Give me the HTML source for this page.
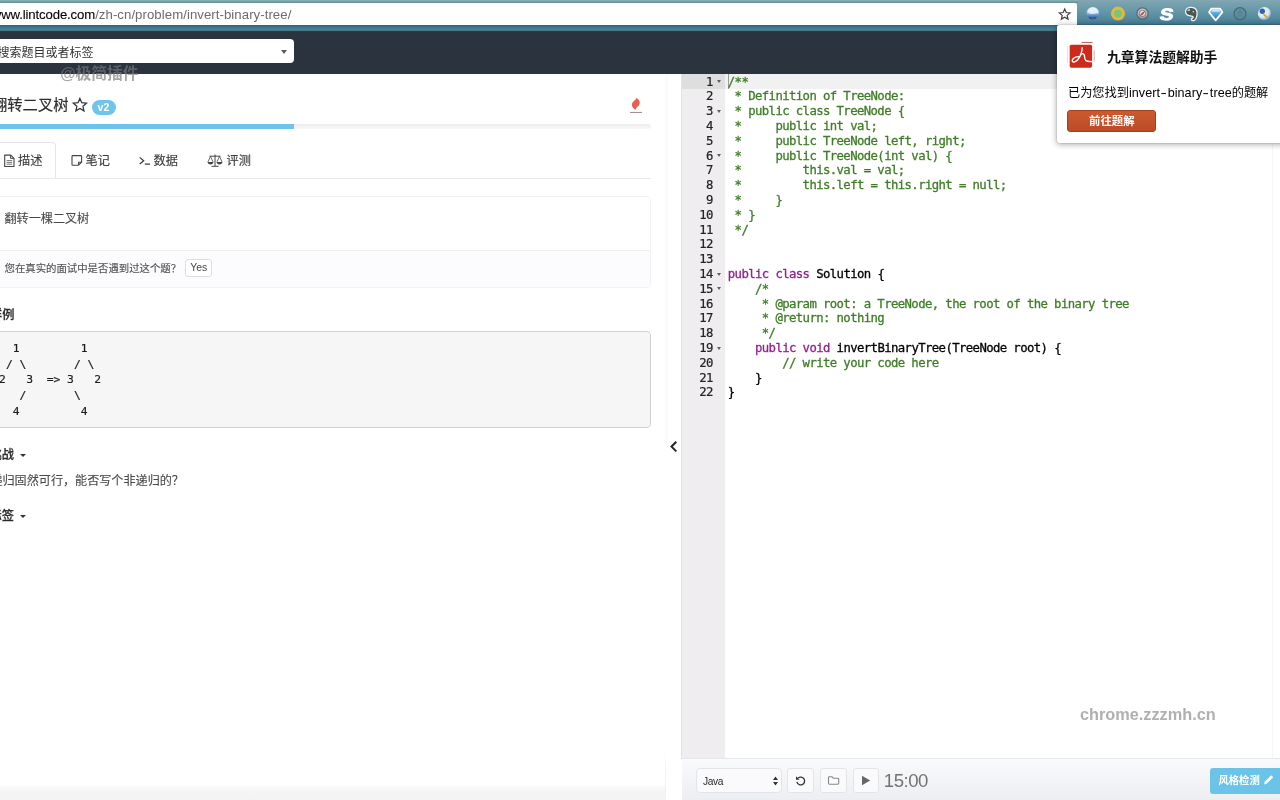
<!DOCTYPE html>
<html lang="zh-CN">
<head>
<meta charset="utf-8">
<title>翻转二叉树 - LintCode</title>
<style>
*{box-sizing:border-box;margin:0;padding:0}
html,body{width:1280px;height:800px;overflow:hidden;background:#fff}
body{position:relative;font-family:"Liberation Sans","Noto Sans CJK SC",sans-serif;color:#333;font-size:12.2px}
.abs{position:absolute;white-space:nowrap}
#root{position:absolute;left:0;top:0;width:1280px;height:800px;overflow:hidden;will-change:transform;transform:translateZ(0)}
svg{position:absolute;overflow:visible}
/* browser chrome */
#chromebar{left:0;top:0;width:1280px;height:26px;background:linear-gradient(#83a7b3 0,#7aa2af 10%,#6799a9 40%,#51889c 75%,#437c94 92%,#315f75 100%)}
#band{left:0;top:25px;width:1280px;height:6.6px;background:linear-gradient(#2d6078 0,#397288 25%,#457d93 55%,#4f869b 75%,#2c4c5c 88%,#1d2a35 100%)}
#topstrip{left:0;top:0;width:1078px;height:3px;background:linear-gradient(#85b3b2 0,#80adae 35%,#688f95 70%,#6c9399 100%)}
#urlbar{left:-10px;top:2.6px;width:1087px;height:22.6px;background:#fff;border-radius:0 2px 0 0}
#url{left:-8.2px;top:7px;font-size:13.2px;line-height:16px;color:#6c6c6c;letter-spacing:.06px}
#url b{font-weight:normal;color:#000;letter-spacing:-.14px;-webkit-text-stroke:.1px #000}
/* navbar */
#navbar{left:0;top:31.5px;width:1280px;height:42.5px;background:#2b333e}
#search{left:-10px;top:39.2px;width:304px;height:24.2px;background:#fff;border-radius:4px}
#searchtxt{left:-2.5px;top:45.5px;font-size:12px;line-height:15px;color:#333}
#caret{left:281.4px;top:49.6px;width:0;height:0;border-left:3.6px solid transparent;border-right:3.6px solid transparent;border-top:4.4px solid #5a5a5a}
#wm1{left:60.3px;top:63.3px;font-size:15.8px;line-height:22px;color:rgba(120,120,120,.66);letter-spacing:-.1px;font-weight:700}
/* left panel */
#title{left:-8px;top:94px;font-size:15.3px;line-height:22px;color:#2e2e2e;font-weight:400;-webkit-text-stroke:.2px}
#badge{left:91.5px;top:99.5px;width:24px;height:15px;border-radius:7.5px;background:#6ec4ea;color:#fff;font-weight:bold;font-size:10.6px;line-height:14.5px;text-align:center}
#prog{left:-10px;top:124px;width:660.5px;height:4.7px;border-radius:3px;background:linear-gradient(#ececec,#f8f8f8);overflow:hidden}
#prog i{display:block;width:304px;height:100%;background:#6cc3eb}
#tabline{left:0;top:177.5px;width:650.5px;height:1px;background:#e8e8e8}
#tabact{left:-10px;top:141.8px;width:65.7px;height:36.7px;border:1px solid #e6e6e6;border-bottom:0;border-radius:4px 4px 0 0;background:#fff}
.tab{top:152.5px;font-size:12.2px;line-height:16px;color:#3d3d3d;font-weight:400;-webkit-text-stroke:.15px}
#panel{left:-10px;top:196px;width:660.5px;height:91.5px;border:1px solid #f2f2f2;border-radius:4px;background:#fff;overflow:hidden}
#pfoot{left:0;top:52.5px;width:660px;height:38px;background:#fcfbfd;border-top:1px solid #f0eff1}
#ptext{left:4.5px;top:211.3px;font-size:12.1px;line-height:17px;color:#4a4a4a;-webkit-text-stroke:.12px}
#ftext{left:4.5px;top:261px;font-size:10.4px;line-height:16px;color:#505050;font-weight:400;-webkit-text-stroke:.12px}
#yes{left:185.2px;top:259.3px;width:27.2px;height:18px;border:1px solid #ddd;border-radius:3px;background:#fff;font-size:10.4px;line-height:16px;text-align:center;color:#444}
.h{font-size:12.2px;line-height:16px;font-weight:500;color:#2b2b2b;-webkit-text-stroke:.25px}
.car{width:0;height:0;border-left:3px solid transparent;border-right:3px solid transparent;border-top:3.5px solid #333}
#pre{left:-10px;top:331px;width:660.5px;height:96.5px;border:1px solid #d2d2d2;border-radius:4px;background:#f6f6f6}
#pretxt{left:-0.9px;top:341.3px;font-family:"DejaVu Sans Mono","Liberation Mono",monospace;font-size:11.3px;line-height:15.6px;color:#1c1c1c;white-space:pre;-webkit-text-stroke:.2px}
#chal{left:-9.6px;top:473px;font-size:12.1px;line-height:17px;color:#4a4a4a;-webkit-text-stroke:.12px}
/* editor */
#gutter{left:681.5px;top:74px;width:43px;height:685px;background:#efedef}
#actg{left:681.5px;top:74px;width:43px;height:14.8px;background:#dedede}
#actl{left:724.5px;top:74px;width:555.5px;height:14.8px;background:#f1f1f1}
#pm{left:1272px;top:74px;width:1px;height:685px;background:#f5f5f5}
#nums,#code{top:74.6px;font-family:"DejaVu Sans Mono","Liberation Mono",monospace;font-size:12.3px;letter-spacing:-.605px;line-height:14.8px;white-space:pre}
#nums{left:681.5px;width:31.3px;text-align:right;color:#222;-webkit-text-stroke:.2px}
#code{left:727.8px;color:#000;-webkit-text-stroke:.3px}
#code .c{color:#3f7d27}
#code .k{color:#951f8f}
.fold{left:716.7px;width:0;height:0;border-left:2.5px solid transparent;border-right:2.5px solid transparent;border-top:3.3px solid #5e5e5e}
#cursor{left:728px;top:74px;width:1px;height:14.8px;background:#9a9a9a}
/* bottom bar */
#bottombar{left:681.5px;top:758px;width:598.5px;height:42px;background:linear-gradient(#f9fafc,#edeef1);border-top:1px solid #e6e7ea}
.btn{top:768px;height:25px;border:1px solid #e3e4e8;border-radius:3px;background:#fafafc}
#timer{left:883.8px;top:769.3px;font-size:18.6px;line-height:24px;color:#737373;letter-spacing:-.5px}
#lint{left:1209.5px;top:768px;width:80px;height:25.5px;border-radius:3px;background:#6cc3e8}
#linttxt{left:1218.5px;top:773px;font-size:10.3px;line-height:15px;color:#fff;font-weight:bold}
#wm2{left:1080px;top:702.5px;font-size:16.3px;line-height:22px;color:#b0b0b0;font-weight:bold}
/* popup */
#popup{left:1057px;top:25px;width:240px;height:118px;background:#fff;border-radius:2px;box-shadow:0 1px 6px rgba(0,0,0,.38),0 0 1px rgba(0,0,0,.5)}
#ptitle{left:1107px;top:47.6px;font-size:13.8px;line-height:20px;font-weight:bold;color:#111}
#pmsg{left:1068px;top:84px;font-size:12.2px;line-height:18px;color:#000}
#pmsg .la{font-size:12.6px;letter-spacing:.05px}
#pmsg i{font-style:normal;display:inline-block;width:7.6px;text-align:center;transform:scaleX(1.5)}
#pbtn{left:1067.4px;top:110px;width:88.8px;height:22.3px;border:1px solid #a1401f;border-radius:3px;background:linear-gradient(#cc5a30,#be4a25);color:#fff;font-weight:bold;font-size:11.4px;line-height:21.6px;text-align:center}
</style>
</head>
<body>
<div id="root">
<div class="abs" id="chromebar"></div>
<div class="abs" id="topstrip"></div>
<div class="abs" id="band"></div>
<div class="abs" id="urlbar"></div>
<div class="abs" id="url"><b>www.lintcode.com</b>/zh-cn/problem/invert-binary-tree/</div>
<div class="abs" id="navbar"></div>
<div class="abs" id="search"></div>
<div class="abs" id="searchtxt">搜索题目或者标签</div>
<div class="abs" id="caret"></div>

<!-- LEFT -->
<div class="abs" id="title">翻转二叉树</div>
<div class="abs" id="badge">v2</div>
<div class="abs" id="prog"><i></i></div>
<div class="abs" id="tabline"></div>
<div class="abs" id="tabact"></div>
<div class="abs tab" style="left:18px">描述</div>
<div class="abs tab" style="left:85.5px">笔记</div>
<div class="abs tab" style="left:153.5px">数据</div>
<div class="abs tab" style="left:226.5px">评测</div>
<div class="abs" id="panel"><div class="abs" id="pfoot"></div></div>
<div class="abs" id="ptext">翻转一棵二叉树</div>
<div class="abs" id="ftext">您在真实的面试中是否遇到过这个题？</div>
<div class="abs" id="yes">Yes</div>
<div class="abs h" style="left:-10px;top:306.8px">样例</div>
<div class="abs" id="pre"></div>
<div class="abs" id="pretxt">  1         1
 / \       / \
2   3  =&gt; 3   2
   /       \
  4         4</div>
<div class="abs h" style="left:-10.5px;top:446.7px">挑战</div>
<div class="abs car" style="left:20.3px;top:453.5px"></div>
<div class="abs" id="chal">递归固然可行，能否写个非递归的？</div>
<div class="abs h" style="left:-10.5px;top:507.7px">标签</div>
<div class="abs car" style="left:20.3px;top:514.5px"></div>

<!-- title star -->
<svg style="left:0;top:0" width="1280" height="800" viewBox="0 0 1280 800" aria-hidden="true">
<polygon points="79.90,98.40 81.78,102.71 86.46,103.17 82.94,106.29 83.96,110.88 79.90,108.50 75.84,110.88 76.86,106.29 73.34,103.17 78.02,102.71" fill="none" stroke="#333" stroke-width="1.25" stroke-linejoin="miter"/>
<!-- fire -->
<path d="M636.300 97.700C638.600 99.200 640.100 101.200 639.700 103.400C639.300 105.700 637.100 106.800 636.100 108.200C635.700 108.800 635.500 109.400 635.600 110.100C633.600 108.700 631.900 106.900 631.900 104.800C631.900 102.600 633.600 101.400 634.800 100.300C635.600 99.500 636.200 98.800 636.300 97.700Z" fill="#e85f4f"/>
<rect x="630" y="111.900" width="12" height="1" fill="#9a8585"/>
<!-- file icon -->
<g fill="none" stroke="#444" stroke-width="1.1">
<path d="M4.700 155.100h6.100l3.200 3.200v8.200h-9.300z" stroke-linejoin="round"/>
<path d="M10.600 155.300v3.100h3.200" stroke-width="1"/>
<path d="M6.600 160.600h5.500M6.600 162.400h5.500M6.600 164.200h5.500" stroke-width=".9" stroke="#666"/>
</g>
<!-- note icon -->
<path d="M72.800 155.600h8.000q.8 0 .8.800v5.800l-3.000 3.000h-5.800q-.8 0-.8-.8v-8.000q0-.8.800-.8zM81.400 162.300h-2.800v2.800" fill="none" stroke="#444" stroke-width="1.1" stroke-linejoin="round"/>
<!-- terminal -->
<path d="M139.700 157.400l4 3.300-4 3.300" fill="none" stroke="#333" stroke-width="1.15"/>
<rect x="144.800" y="163.500" width="5.200" height="1.200" fill="#333"/>
<!-- scale -->
<g fill="none" stroke="#444" stroke-width="1">
<path d="M215 154.500v11.500M209.500 156.200h11M211.500 166.300h7" />
<path d="M210.500 156.500l-2.600 5.400M210.500 156.500l2.600 5.400M219.500 156.500l-2.600 5.400M219.500 156.500l2.600 5.400" stroke-width=".8"/>
<path d="M207.600 162.100h5.800c0 1.500-1.300 2.300-2.900 2.300s-2.900-.8-2.900-2.300zM216.600 162.100h5.800c0 1.500-1.300 2.300-2.900 2.300s-2.900-.8-2.900-2.300z" fill="#444" stroke="none"/>
</g>
<!-- chevron -->
<path d="M676.300 441.800l-4.800 4.800 4.800 4.800" fill="none" stroke="#222" stroke-width="2" />
</svg>
<div class="abs" id="wm1">@极简插件</div>

<!-- EDITOR -->
<div class="abs" style="left:664.5px;top:74px;width:3px;height:370px;background:#fbfbfb"></div>
<div class="abs" style="left:0;top:786px;width:665px;height:14px;background:linear-gradient(#fafafa,#f5f5f5 40%,#f4f4f4)"></div>
<div class="abs" style="left:664.7px;top:752px;width:1.3px;height:48px;background:linear-gradient(#fdfdfd,#f3f3f3 40%)"></div>
<div class="abs" id="gutter"></div>
<div class="abs" id="actg"></div>
<div class="abs" style="left:681.3px;top:74px;width:1.2px;height:685px;background:#e2e2e2"></div>
<div class="abs" id="actl"></div>
<div class="abs" id="pm"></div>
<div class="abs fold" style="top:80.2px"></div>
<div class="abs fold" style="top:109.8px"></div>
<div class="abs fold" style="top:154.2px"></div>
<div class="abs fold" style="top:272.6px"></div>
<div class="abs fold" style="top:287.4px"></div>
<div class="abs fold" style="top:346.6px"></div>
<div class="abs" id="cursor"></div>
<div class="abs" id="nums">1
2
3
4
5
6
7
8
9
10
11
12
13
14
15
16
17
18
19
20
21
22</div>
<div class="abs" id="code"><span class="c">/**
 * Definition of TreeNode:
 * public class TreeNode {
 *     public int val;
 *     public TreeNode left, right;
 *     public TreeNode(int val) {
 *         this.val = val;
 *         this.left = this.right = null;
 *     }
 * }
 */</span>


<span class="k">public</span> <span class="k">class</span> Solution {
    <span class="c">/*
     * @param root: a TreeNode, the root of the binary tree
     * @return: nothing
     */</span>
    <span class="k">public</span> <span class="k">void</span> invertBinaryTree(TreeNode root) {
        <span class="c">// write your code here</span>
    }
}</div>
<div class="abs" id="wm2">chrome.zzzmh.cn</div>
<div class="abs" id="bottombar"></div>
<div class="abs btn" style="left:696px;width:85.5px;border-radius:4px"></div>
<div class="abs" style="left:703px;top:773.8px;font-size:10.2px;line-height:15px;color:#2a2a2a;letter-spacing:-.35px">Java</div>
<div class="abs btn" style="left:786.5px;width:27.5px"></div>
<div class="abs btn" style="left:819.5px;width:27px"></div>
<div class="abs btn" style="left:852.5px;width:26.5px"></div>

<svg style="left:0;top:0" width="1280" height="800" viewBox="0 0 1280 800" aria-hidden="true">
<path d="M773 780l2.500-3.600 2.500 3.600zM773 782l2.500 3.600 2.500-3.600z" fill="#333"/>
<path d="M798.100 778.100a3.900 3.900 0 1 1-1.200 3.800" fill="none" stroke="#333" stroke-width="1.300"/>
<path d="M796 776.200v3.600h3.600z" fill="#333"/>
<path d="M828.500 777.700q0-.9.900-.9h2.600l1.300 1.400h4.500q.9 0 .9.900v4.200q0 .9-.9.900h-8.400q-.9 0-.9-.9z" fill="none" stroke="#888" stroke-width="1.100"/>
<path d="M862 775.800l8.200 4.700-8.200 4.700z" fill="#666"/>
</svg>
<div class="abs" id="timer">15:00</div>
<div class="abs" id="lint"></div>
<div class="abs" id="linttxt">风格检测</div>
<svg style="left:0;top:0" width="1280" height="800" viewBox="0 0 1280 800" aria-hidden="true"><path d="M1264 784.500l.9-2.900 6.300-6.300 2 2-6.300 6.300z" fill="#fff"/></svg>


<svg style="left:0;top:0" width="1280" height="800" viewBox="0 0 1280 800" aria-hidden="true">
<defs>
<linearGradient id="gl" x1="0" y1="0" x2="0" y2="1"><stop offset="0" stop-color="#dcebfa"/><stop offset=".45" stop-color="#a9c6e8"/><stop offset=".7" stop-color="#5b86c2"/><stop offset="1" stop-color="#2a548f"/></linearGradient>
<radialGradient id="cp" cx="50%" cy="40%" r="70%"><stop offset="0" stop-color="#f4f4f4"/><stop offset=".6" stop-color="#b9bcc0"/><stop offset="1" stop-color="#6f767c"/></radialGradient>
<radialGradient id="lk" cx="40%" cy="35%" r="75%"><stop offset="0" stop-color="#ffffff"/><stop offset=".6" stop-color="#d5e3f2"/><stop offset="1" stop-color="#3f6fb5"/></radialGradient>
<linearGradient id="dm" x1="0" y1="0" x2="0" y2="1"><stop offset="0" stop-color="#7fd0f5"/><stop offset="1" stop-color="#1f6fb8"/></linearGradient>
</defs>
<!-- url star -->
<polygon points="1064.70,9.00 1066.23,12.50 1070.03,12.87 1067.17,15.40 1067.99,19.13 1064.70,17.20 1061.41,19.13 1062.23,15.40 1059.37,12.87 1063.17,12.50" fill="none" stroke="#444" stroke-width="1.25"/>
<!-- globe -->
<circle cx="1092.800" cy="13.200" r="6.200" fill="url(#gl)"/>
<path d="M1087.300 11.600c.8-2.600 3.300-4.300 5.800-4.200 2.700.1 5 2.100 5.500 4.700-1.300 1.600-3.200 1.300-4.800 1.700-2.300.6-4.400.200-6.500-2.200z" fill="#eef6ff" opacity=".8"/>
<path d="M1089.500 17.300q1.500.600 2.000 1.600M1093.500 17.600q1.300.300 2.200.600" stroke="#1c3f78" stroke-width="1.300" fill="none" opacity=".8"/>
<!-- yellow / green -->
<circle cx="1118" cy="13.600" r="7" fill="#e2b93b"/>
<circle cx="1118" cy="13.600" r="3.900" fill="#7cc576"/>
<!-- compass -->
<circle cx="1142.500" cy="13.500" r="6.300" fill="#5f676d"/>
<circle cx="1142.500" cy="13.500" r="5.100" fill="url(#cp)"/>
<circle cx="1142.500" cy="13.500" r="3.300" fill="none" stroke="#6b7278" stroke-width=".8"/>
<path d="M1145.300 10.700l-2 3.600-3.600 2 2-3.600z" fill="#b9473d"/>
<!-- S -->
<text x="1159.300" y="20.300" font-family="'Liberation Sans',sans-serif" font-weight="bold" font-size="16.500" fill="#fff" stroke="#fff" stroke-width=".9" textLength="13.500" transform="skewX(-8) translate(2.9 0)" lengthAdjust="spacingAndGlyphs">S</text>
<!-- elephant -->
<path d="M1186.300 9.300c1.200-2 5.700-2.700 8.200-1.200 2.200 1.300 2.800 4 2.500 6.700-.3 2.600-1.100 5.200-3.200 5.800-1.400.4-2.600-.4-2.300-1.500.2-1 1.500-.8 1.700-1.700.2-1.100-1.400-1.300-2.900-1.500-2.500-.4-4.400-1.700-4.700-3.800-.2-1.100.100-2.000.700-2.800z" fill="#4a5753" stroke="#eef3f3" stroke-width="1.300" stroke-linejoin="round"/>
<path d="M1187 10.700l2.700-2.300v2.600z" fill="#e3ebe9"/>
<circle cx="1193.300" cy="11.800" r=".8" fill="#dfe7e5"/>
<!-- diamond -->
<path d="M1211.200 8.600h9.000l2.200 3.500-6.700 8.300-6.700-8.300z" fill="url(#dm)" stroke="#fff" stroke-width="1.700" stroke-linejoin="round"/>
<path d="M1212.300 9.800h6.800l1.200 2h-9.200z" fill="#c9ecfc" opacity=".9"/>
<!-- grey circle -->
<circle cx="1240" cy="13.700" r="6" fill="#5d8a99" fill-opacity=".55" stroke="#456a78" stroke-width="1.300"/>
<circle cx="1240" cy="12.300" r="1.500" fill="none" stroke="#557a88" stroke-width=".9"/>
<path d="M1237.300 16.800q2.700-2.600 5.400 0" fill="none" stroke="#557a88" stroke-width=".9"/>
<!-- last icon -->
<circle cx="1264.500" cy="13.700" r="6.600" fill="url(#lk)"/>
<circle cx="1262.300" cy="11.200" r="2.700" fill="#2f62b3"/>
<path d="M1264 14.500l3.500 3.300" stroke="#d9a92a" stroke-width="1.800" stroke-linecap="round"/>
</svg>
<!-- POPUP -->
<div class="abs" id="popup"></div>

<svg style="left:0;top:0" width="1280" height="800" viewBox="0 0 1280 800" aria-hidden="true">
<rect x="1069" y="44" width="23.800" height="24.400" rx="2.200" fill="#fff"/>
<rect x="1069.700" y="44.700" width="22.400" height="23" rx="1.600" fill="#cd2a1c"/>
<path d="M1081.500 42.400h11.100" fill="none" stroke="#a3342b" stroke-width=".8"/>
<path d="M1094.200 49.800v11.700" fill="none" stroke="#bf9a98" stroke-width=".8"/>
<path d="M1067.600 46.500v16.500" fill="none" stroke="#f3c6c1" stroke-width=".7"/>
<path d="M1082.200 47.800C1082 52 1080.800 56.500 1077.500 60C1075.800 61.800 1073.300 62.800 1072.400 61.300C1071.600 59.900 1073.500 58 1075.800 57.200C1077.200 56.700 1078.600 56.400 1079.800 56.400" fill="none" stroke="#fff" stroke-width="1.350" stroke-linecap="round"/>
<path d="M1080.500 54.300C1082 53.400 1083.600 53.400 1084.200 55C1084.800 56.800 1084.500 59 1085.600 60.300C1086.800 61.600 1089.500 61.600 1092 61.600" fill="none" stroke="#fff" stroke-width="1.350" stroke-linecap="round"/>
</svg>
<div class="abs" id="ptitle">九章算法题解助手</div>
<div class="abs" id="pmsg">已为您找到<span class="la">invert<i>-</i>binary<i>-</i>tree</span>的题解</div>
<div class="abs" id="pbtn">前往题解</div>
</div>
</body>
</html>
